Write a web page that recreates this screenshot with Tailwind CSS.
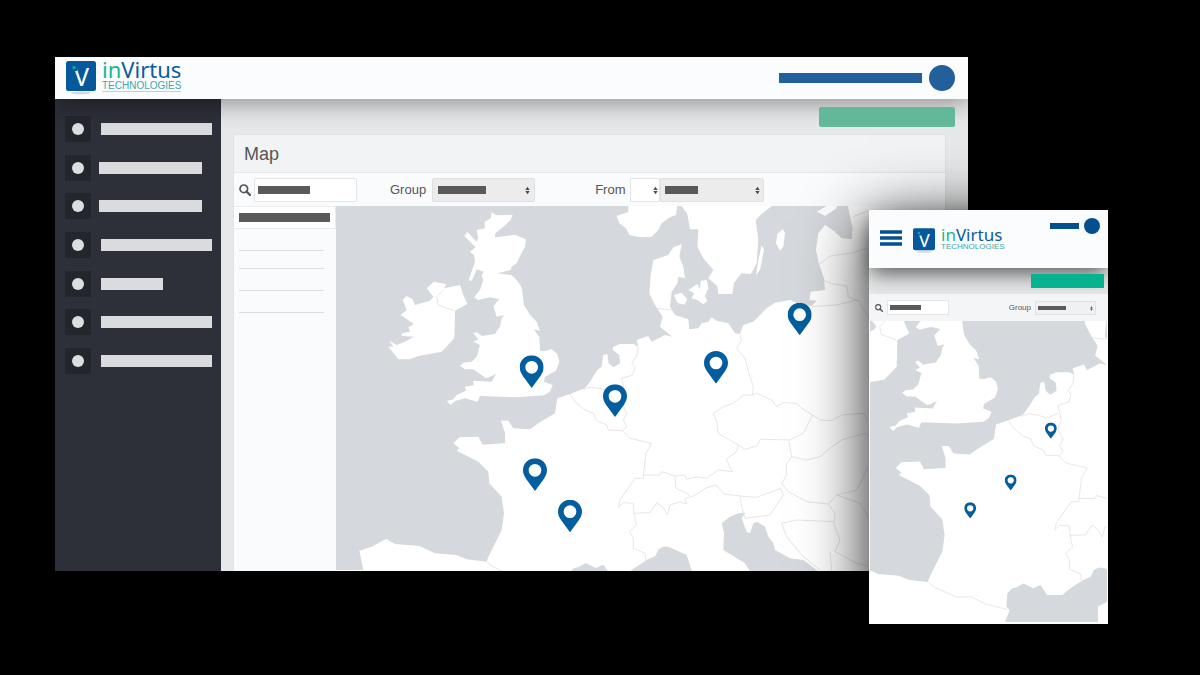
<!DOCTYPE html>
<html lang="en">
<head>
  <meta charset="UTF-8">
  <meta name="viewport" content="width=device-width, initial-scale=1.0">
  <title>inVirtus Technologies - Map</title>
  <script src="https://cdn.jsdelivr.net/npm/@tailwindcss/browser@4"></script>
</head>
<body class="bg-black font-['Liberation_Sans',Arial,sans-serif] text-[#555]">

  <!-- shared shapes -->
  <svg class="absolute w-0 h-0" aria-hidden="true">
    <defs>
      <symbol id="logo" viewBox="0 0 30 35">
        <ellipse cx="15" cy="32" rx="10" ry="1.5" fill="#d5dade" />
        <rect width="30" height="30" rx="2.5" fill="#04589b" />
        <text x="15.500" y="25" text-anchor="middle" font-family="Noto Sans, sans-serif" font-size="25" fill="#fff">V</text>
        <rect x="5" y="5" width="6" height="5" fill="#04589b" />
        <circle cx="8" cy="6.500" r="1.700" fill="#12a7a4" />
      </symbol>

      <symbol id="search" viewBox="0 0 12 12">
        <circle cx="4.800" cy="4.800" r="3.800" fill="none" stroke="#555" stroke-width="1.700" />
        <path d="M7.600 7.600L11 11" stroke="#555" stroke-width="2.200" stroke-linecap="round" />
      </symbol>

      <symbol id="sort" viewBox="0 0 6 10">
        <path d="M3 .5L5.600 4.400H.4zM3 9.500L5.600 5.600H.4z" fill="#4a4a4a" />
      </symbol>

      <symbol id="pin" viewBox="0 0 72 98">
        <path fill="#025e9e" fill-rule="evenodd" d="M36 0C16 0 0 16 0 36C0 46 4 53 9 61L36 98L63 61C68 53 72 46 72 36C72 16 56 0 36 0zM36 17a19 19 0 1 1 0 38a19 19 0 1 1 0-38z" />
      </symbol>

      <g id="europe">
        <g fill="#fff">
          <!-- Great Britain -->
          <path d="M485 36L498 46L548 45L540 62L520 80L496 100L495 112L530 108L555 104L588 118L585 140L572 165L560 190L545 200L542 210L502 220L545 226L560 240L575 262L582 315L600 345L620 365L630 392L612 388L628 412L630 452L642 454L665 448L682 462L688 485L678 512L645 530L642 545L668 555L660 575L642 586L560 592L450 588L442 605L405 595L375 603L362 615L350 603L370 598L380 585L408 572L405 560L430 556L430 542L485 545L498 522L480 530L468 535L430 508L405 508L390 497L400 488L425 485L440 470L450 435L430 425L445 418L430 400L440 396L455 408L495 402L502 390L510 380L515 355L522 345L500 350L490 318L508 298L480 292L455 297L445 300L432 292L450 270L460 240L455 225L462 215L440 208L425 243L416 240L435 185L432 165L420 155L437 142L403 108L412 96L440 125L445 115L440 90L465 85L463 66L482 55z" />
          <!-- Ireland -->
          <path d="M290 265L312 245L350 253L342 265L390 255L398 280L412 312L375 332L373 415L335 455L265 468L240 478L205 478L175 440L190 440L178 422L200 435L225 425L252 410L215 408L215 400L240 395L235 382L252 372L212 345L230 330L218 300L230 288L248 298L255 315L300 302L310 290z" />
          <!-- continent -->
          <path d="M100 1110L88 1052L125 1040L168 1017L195 1032L268 1038L315 1060L380 1065L410 1078L470 1085L475 1070L515 990L522 940L515 890L478 850L475 815L445 785L380 752L388 745L370 730L388 712L445 710L458 734L525 730L525 700L513 662L535 662L550 685L600 688L625 670L675 640L682 595L720 582L765 565L780 545L802 510L815 500L820 465L832 462L836 490L850 502L870 490L868 465L848 450L850 440L870 432L910 432L925 440L920 420L955 408L965 425L1005 405L1027 410L990 380L998 350L975 315L958 280L962 225L970 180L1015 165L1030 142L1055 132L1048 170L1060 200L1065 235L1045 230L1042 250L1025 275L1020 320L1035 345L1075 358L1078 388L1105 385L1115 370L1135 365L1145 352L1160 362L1195 370L1215 400L1230 402L1240 375L1270 365L1310 325L1335 308L1380 300L1415 315L1445 318L1460 302L1438 300L1442 275L1485 270L1482 235L1465 185L1458 150L1465 100L1485 75L1515 95L1535 115L1565 118L1568 85L1555 25V0H1980V1300H-60V1110z" />
          <!-- Norway, Sweden -->
          <path d="M895 0V35L860 48L868 70L888 85L898 105L930 112L965 110L985 90L995 70L1020 52L1038 45L1044 0z" />
          <path d="M1055 0V18L1072 42L1080 88L1105 88L1102 140L1120 175L1150 210L1135 235L1162 258L1165 282L1207 282L1212 248L1235 220L1262 222L1270 210L1280 190L1285 120L1277 60L1295 42L1325 18V0z" />
          <!-- Baltic and Danish islands -->
          <path d="M1295 135L1302 150L1290 210L1278 224L1285 180zM1358 88L1365 98L1360 140L1350 152L1338 130L1342 102z" />
          <path d="M1460 35L1490 18L1520 12V25L1485 48L1475 42zM1032 285L1055 278L1072 298L1063 314L1042 308z" />
          <path d="M1075 270L1102 252L1110 268L1112 242L1130 240L1135 265L1125 288L1132 303L1120 313L1102 300L1085 295L1092 280z" />
        </g>

        <g fill="#d5d8dc">
          <!-- Mediterranean and Adriatic -->
          <path d="M708 1215L724 1172L714 1161L717 1120L732 1104L745 1102L767 1089L798 1104L820 1094L841 1125L888 1125L905 1110L950 1080L976 1068L986 1047L1000 1040L1015 1040L1070 1065L1085 1110L1100 1215z" />
          <path d="M1175 970L1200 950L1225 940L1246 938L1235 955L1250 995L1260 1000L1270 970L1280 965L1305 980L1315 1010L1330 1030L1335 1050L1380 1075L1420 1080L1460 1110L1520 1215H1310L1270 1130L1245 1090L1180 1050L1182 1000z" />
        </g>
        <path d="M999 1215V1161L1028 1146L1040 1215z" fill="#fff" />

        <!-- national borders -->
        <g transform="translate(780 540)" fill="none" stroke="#ebe4e7" stroke-width="3" stroke-linejoin="round">
          <path d="M-60 42L-45 65L-15 90L10 100L20 122L50 135L55 150L97 152L110 140L100 120L110 100L95 70L105 40L95-5L128-15L135-40L125-50L140-70L145-100M-20 30L0 22L30 25L60 35L95 20" />
          <path d="M97 152L120 175L185 190L168 220L160 285L210 285L215 275L255 288L258 325L290 340L302 350M160 285V295H135L90 360L85 382L100 368L130 370L132 400L180 398L200 368L218 380L232 405L240 375L270 365L290 372L285 355L305 350L325 340L345 325L378 315L402 342L450 348L500 352L545 335L572 325" />
          <path d="M255 288L285 285L290 298L320 290L350 295L385 270L428 275L408 238L440 215L445 195L415 178L385 160L380 125L370 100L400 80L430 70L460 45L487 45L500 40L545 60L560 80L580 68L620 70L635 85L668 105L640 160L600 180L510 178L500 198L465 208L445 195" />
          <path d="M450-135L455-120L440-95L465-65L480-10L490 20L487 45" />
          <path d="M668 105L690 120L725 122L755 105L820 100L832 120M597 185L605 230L650 240L690 230L720 205L755 180L825 160L840 170M605 230L588 255L590 285L575 310L595 335L650 365L715 372L740 345L800 330L835 260" />
          <path d="M450 350L455 380L465 415L540 405L580 345L572 325M575 430L620 420L730 425L740 455L750 480L735 515L800 550L840 560M575 430L590 470L640 530L690 570M715 372L735 400L733 425M720 515L725 575M740 345L810 370L840 420" />
          <path d="M132 400L140 435L118 455L130 475V505L165 520L168 545M-310 545L-288 562L-219 592L-177 590L-131 613L-63 630M200-215L245-210" />
          <path d="M-440-270L-460-250L-455-225L-408-208" />
          <path d="M685-345L720-372L780-380L830-395M702-298L730-288L770-282L775-250L810-235M665-220L740-225L800-240M810-230L840-180M790-490L840-510" />
        </g>
      </g>
    </defs>
  </svg>

  <main class="relative min-h-screen pt-[57px] pb-[51px] pl-[55px] pr-[232px]">

    <!-- desktop window -->
    <section class="overflow-hidden bg-[#e7e8e9]">
      <header class="relative z-10 flex items-center justify-between h-[42px] pl-[11px] pr-[13px] bg-[#fafcfe] shadow-[0_4px_24px_rgba(0,0,0,0.4)]">
        <a href="#" class="flex items-center gap-[6px]" aria-label="inVirtus Technologies">
          <svg class="w-[30px] h-[35px]"><use href="#logo" /></svg>
          <span class="block pb-[7px]">
            <span class="block font-['Noto_Sans',sans-serif] text-[22px] leading-[24px] text-[#0b5c9c]"><span class="text-[#18b795]">in</span>Virtus</span>
            <span class="block border-b border-[#a5dcd6] text-[10px] leading-[10px] text-[#3fa5ac]">TECHNOLOGIES</span>
          </span>
        </a>
        <div class="flex items-center gap-[7px]">
          <span class="w-[143px] h-[10px] bg-[#235f9b]"></span>
          <span class="size-[26px] rounded-full bg-[#235f9b]"></span>
        </div>
      </header>

      <div class="flex">
        <nav class="w-[166px] shrink-0 bg-[#2d2f39] pt-[17px] pl-[10px]">
          <ul class="flex flex-col justify-between h-[258px]">
            <li><a href="#" class="flex items-center gap-[10px]" aria-label="Menu item 1"><span class="grid place-items-center size-[26px] bg-[#24262d]"><span class="size-3 rounded-full bg-[#dcdee0]"></span></span><span class="w-[111px] h-3 bg-[#d9dbde]"></span></a></li>
            <li><a href="#" class="flex items-center gap-2" aria-label="Menu item 2"><span class="grid place-items-center size-[26px] bg-[#24262d]"><span class="size-3 rounded-full bg-[#dcdee0]"></span></span><span class="w-[103px] h-3 bg-[#d9dbde]"></span></a></li>
            <li><a href="#" class="flex items-center gap-2" aria-label="Menu item 3"><span class="grid place-items-center size-[26px] bg-[#24262d]"><span class="size-3 rounded-full bg-[#dcdee0]"></span></span><span class="w-[103px] h-3 bg-[#d9dbde]"></span></a></li>
            <li><a href="#" class="flex items-center gap-[10px]" aria-label="Menu item 4"><span class="grid place-items-center size-[26px] bg-[#24262d]"><span class="size-3 rounded-full bg-[#dcdee0]"></span></span><span class="w-[111px] h-3 bg-[#d9dbde]"></span></a></li>
            <li><a href="#" class="flex items-center gap-[10px]" aria-label="Menu item 5"><span class="grid place-items-center size-[26px] bg-[#24262d]"><span class="size-3 rounded-full bg-[#dcdee0]"></span></span><span class="w-[62px] h-3 bg-[#d9dbde]"></span></a></li>
            <li><a href="#" class="flex items-center gap-[10px]" aria-label="Menu item 6"><span class="grid place-items-center size-[26px] bg-[#24262d]"><span class="size-3 rounded-full bg-[#dcdee0]"></span></span><span class="w-[111px] h-3 bg-[#d9dbde]"></span></a></li>
            <li><a href="#" class="flex items-center gap-[10px]" aria-label="Menu item 7"><span class="grid place-items-center size-[26px] bg-[#24262d]"><span class="size-3 rounded-full bg-[#dcdee0]"></span></span><span class="w-[111px] h-3 bg-[#d9dbde]"></span></a></li>
          </ul>
        </nav>

        <div class="grow min-w-0 pt-2 pl-3">
          <div class="relative z-20 flex justify-end pr-[13px] pb-[7px]">
            <button type="button" class="w-[136px] h-5 rounded-xs bg-[#62b899]" aria-label="Add"></button>
          </div>

          <div class="mr-[22px] border-x border-t border-[#e0e2e3] bg-[#f9fbfd]">
            <h1 class="h-[38px] pl-[10px] bg-[#f1f3f5] border-b border-[#e5e7e9] text-[18px] leading-[38px]">Map</h1>

            <form class="flex items-center h-[33px] pl-[5px] text-[13px]">
              <svg class="w-3 h-3 mr-[3px]"><use href="#search" /></svg>
              <span class="relative">
                <input type="text" aria-label="Search" class="block w-[103px] h-6 bg-white border border-[#e3e5e7] rounded-xs">
                <span class="absolute left-1 top-2 w-[52px] h-2 bg-[#5a5a5a]"></span>
              </span>

              <label for="group" class="ml-[33px] mr-[6px]">Group</label>
              <span class="relative">
                <select id="group" class="block w-[103px] h-6 appearance-none bg-[#ececed] border border-[#dfe0e2] rounded-xs"><option></option></select>
                <span class="absolute left-[6px] top-2 w-[48px] h-2 bg-[#5a5a5a]"></span>
                <svg class="absolute right-[5px] top-2 w-[5px] h-[9px]"><use href="#sort" /></svg>
              </span>

              <label for="from" class="ml-[60px] mr-[5px]">From</label>
              <span class="relative">
                <input id="from" type="text" class="block w-[30px] h-6 bg-white border border-[#e3e5e7]">
                <svg class="absolute right-[2px] top-2 w-[5px] h-[9px]"><use href="#sort" /></svg>
              </span>
              <span class="relative">
                <select aria-label="Period" class="block w-[104px] h-6 appearance-none bg-[#ececed] border border-[#dfe0e2] rounded-xs"><option></option></select>
                <span class="absolute left-[5px] top-2 w-[33px] h-2 bg-[#5a5a5a]"></span>
                <svg class="absolute right-[4px] top-2 w-[5px] h-[9px]"><use href="#sort" /></svg>
              </span>
            </form>

            <div class="flex">
              <aside class="w-[102px] shrink-0">
                <div class="h-[23px] pt-[6px] pl-[5px] bg-white border-y border-r border-[#e9ebed]">
                  <div class="w-[91px] h-[9px] bg-[#5a5a5a]"></div>
                </div>
                <ul class="ml-[5px] mr-3">
                  <li class="h-[22px] border-b border-[#dcdee0]"></li>
                  <li class="h-[18px] border-b border-[#dcdee0]"></li>
                  <li class="h-[22px] border-b border-[#dcdee0]"></li>
                  <li class="h-[22px] border-b border-[#dcdee0]"></li>
                </ul>
              </aside>
              <div class="grow min-w-0 bg-[#d5d8dc]">
                <svg class="block w-full h-[365px]" viewBox="18 18 1827 1095" preserveAspectRatio="xMinYMin slice" role="img" aria-label="Map of Europe">
                  <use href="#europe" />
                  <use href="#pin" x="569" y="466" width="72" height="98" />
                  <use href="#pin" x="819" y="553" width="72" height="98" />
                  <use href="#pin" x="1122" y="453" width="72" height="98" />
                  <use href="#pin" x="1373" y="308" width="72" height="98" />
                  <use href="#pin" x="579" y="775" width="72" height="98" />
                  <use href="#pin" x="684" y="899" width="72" height="98" />
                </svg>
              </div>
            </div>
          </div>
        </div>
      </div>
    </section>

    <!-- phone window, floats over the corner of the desktop one -->
    <section class="absolute z-30 top-[210px] right-[92px] w-[239px] bg-[#e6e7e8] border-b border-white shadow-[0_10px_60px_rgba(0,0,0,0.9)]">
      <header class="relative z-10 flex items-start justify-between h-[58px] pt-2 pl-[11px] pr-2 bg-[#fafcfe] shadow-[0_8px_20px_-2px_rgba(0,0,0,0.6)]">
        <div class="flex items-start gap-[11px] pt-[10px]">
          <button type="button" aria-label="Menu" class="pt-[2px]">
            <svg class="block w-[22px] h-4" viewBox="0 0 22 16"><path d="M0 2H22M0 8H22M0 14H22" stroke="#04508f" stroke-width="3.400" /></svg>
          </button>
          <a href="#" class="flex items-start gap-[6px]" aria-label="inVirtus Technologies">
            <svg class="w-[22px] h-[26px]"><use href="#logo" /></svg>
            <span class="block">
              <span class="block font-['Noto_Sans',sans-serif] text-[17px] leading-[14px] text-[#0b5c9c]"><span class="text-[#18b795]">in</span>Virtus</span>
              <span class="block text-[8px] leading-[10px] text-[#3fa5ac]">TECHNOLOGIES</span>
            </span>
          </a>
        </div>
        <div class="flex items-center gap-[5px]">
          <span class="w-[29px] h-[6px] bg-[#04508f]"></span>
          <span class="size-4 rounded-full bg-[#04508f]"></span>
        </div>
      </header>

      <div class="relative z-20 flex justify-end pt-[6px] pr-1 pb-[6px]">
        <button type="button" class="w-[73px] h-[14px] bg-[#06b38e]" aria-label="Add"></button>
      </div>

      <form class="flex items-center h-[27px] pl-[6px] pr-3 bg-[#f4f5f7] text-[8px]">
        <svg class="w-2 h-2 mr-1"><use href="#search" /></svg>
        <span class="relative">
          <input type="text" aria-label="Search" class="block w-[62px] h-[15px] bg-white border border-[#e3e5e7]">
          <span class="absolute left-[3px] top-[5px] w-[31px] h-[5px] bg-[#5a5a5a]"></span>
        </span>
        <label for="group-small" class="ml-auto mr-1">Group</label>
        <span class="relative">
          <select id="group-small" class="block w-[61px] h-[14px] appearance-none bg-[#f0f1f2] border border-[#e0e1e3]"><option></option></select>
          <span class="absolute left-[3px] top-[5px] w-[28px] h-1 bg-[#5a5a5a]"></span>
          <svg class="absolute right-[3px] top-[5px] w-[3px] h-[5px]"><use href="#sort" /></svg>
        </span>
      </form>

      <div class="bg-[#d5d8dc] border-x border-b border-white">
        <svg class="block w-full h-[301px]" viewBox="290 273 738 936" preserveAspectRatio="xMinYMin slice" role="img" aria-label="Map of Western Europe">
          <use href="#europe" />
          <use href="#pin" x="834" y="589" width="37" height="50" />
          <use href="#pin" x="709" y="750" width="37" height="50" />
          <use href="#pin" x="583" y="837" width="37" height="50" />
        </svg>
      </div>
    </section>
  </main>
</body>
</html>
